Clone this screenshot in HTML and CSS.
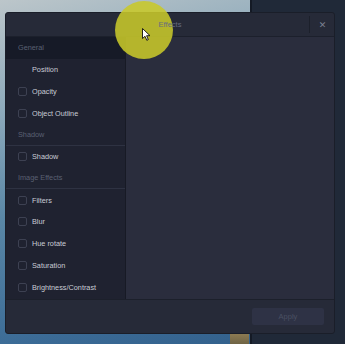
FILE: index.html
```html
<!DOCTYPE html>
<html>
<head>
    <title>Effects</title>
    <link rel="stylesheet" href="styles.css">
</head>
<body>
    <div class="screen">
        <div class="dialog">
            <div class="titlebar">
                <span class="title">Effects</span>
                <span class="close-sep"></span>
                <button class="close">&#x2715;</button>
            </div>

            <div class="main">
                <div class="sidebar">
                    <div class="group-head active">General</div>
                    <div class="item no-box">Position</div>
                    <div class="item"><span class="box"></span>Opacity</div>
                    <div class="item"><span class="box"></span>Object Outline</div>

                    <div class="group-head">Shadow</div>
                    <div class="item"><span class="box"></span>Shadow</div>

                    <div class="group-head">Image Effects</div>
                    <div class="item"><span class="box"></span>Filters</div>
                    <div class="item"><span class="box"></span>Blur</div>
                    <div class="item"><span class="box"></span>Hue rotate</div>
                    <div class="item"><span class="box"></span>Saturation</div>
                    <div class="item"><span class="box"></span>Brightness/Contrast</div>
                </div>
                <div class="content"></div>
            </div>

            <div class="footer">
                <button class="apply">Apply</button>
            </div>
        </div>

        <!-- screen recording click highlight -->
        <div class="highlight"></div>
        <svg class="cursor" width="9" height="13" viewBox="0 0 9 13">
            <path d="M0.5 0.5 L0.5 10.5 L3 8.3 L4.8 12.3 L6.3 11.6 L4.6 7.7 L8 7.7 Z" fill="#fff" stroke="#111" stroke-width="0.9"/>
        </svg>
    </div>
</body>
</html>
```

FILE: styles.css
```css
html, body {
    margin: 0;
    padding: 0;
}
body {
    width: 345px;
    height: 344px;
    overflow: hidden;
    font-family: "Liberation Sans", Arial, sans-serif;
    background:
        linear-gradient(#8c7a52, #6f6445) 230px 334px / 19px 10px no-repeat,
        linear-gradient(to right, transparent 250px, #141a25 250px, #141a25 252px, #202938 252px),
        linear-gradient(165deg, #bcc6ca 0%, #8eaabb 25%, #5a87a6 50%, #3b6b96 80%, #2f5c88 100%);
}
.screen {
    position: relative;
    width: 345px;
    height: 344px;
    padding: 12px 0 0 5px;
    box-sizing: border-box;
}
.dialog {
    width: 330px;
    height: 322px;
    background-color: #262a38;
    border: 1px solid #1a1e29;
    border-radius: 3px;
    box-sizing: border-box;
    display: flex;
    flex-direction: column;
    overflow: hidden;
}
.titlebar {
    height: 23px;
    display: flex;
    align-items: center;
    border-bottom: 1px solid #1c202c;
}
.title {
    flex: 1;
    text-align: center;
    font-size: 7.5px;
    color: #676d80;
    padding-left: 25px;
    position: relative;
    z-index: 2;
}
.close-sep {
    width: 1px;
    height: 17px;
    background-color: #1c202b;
}
.close {
    width: 24px;
    height: 23px;
    border: none;
    background: none;
    color: #7a8090;
    font-size: 9px;
    font-weight: bold;
    padding: 0 0 0 1px;
    font-family: "DejaVu Sans", sans-serif;
}
.main {
    height: 262px;
    display: flex;
    border-bottom: 1px solid #1c202b;
}
.sidebar {
    width: 119px;
    background-color: #1f2230;
    border-right: 1px solid #171a25;
    display: flex;
    flex-direction: column;
}
.content {
    flex: 1;
    background-color: #2a2d3d;
}
.group-head {
    height: 21.75px;
    box-sizing: border-box;
    padding-left: 12px;
    display: flex;
    align-items: center;
    font-size: 7.3px;
    color: #5a6072;
    border-bottom: 1px solid #2e3242;
}
.group-head.active {
    background-color: #161a27;
    border-bottom: none;
}
.item {
    height: 21.75px;
    display: flex;
    align-items: center;
    padding-left: 12px;
    font-size: 7.3px;
    color: #c9ccd5;
}
.item.no-box {
    padding-left: 26px;
}
.box {
    width: 7px;
    height: 7px;
    border: 1px solid #3d4152;
    border-radius: 2px;
    margin-right: 5px;
}
.footer {
    flex: 1;
    display: flex;
    justify-content: flex-end;
    align-items: center;
    padding-right: 10px;
}
.apply {
    width: 72px;
    height: 17px;
    border: none;
    border-radius: 2px;
    background-color: #2e3245;
    color: #4a5062;
    font-family: "Liberation Sans", Arial, sans-serif;
    font-size: 7.5px;
    padding: 0;
    margin-bottom: 1px;
}
.highlight {
    position: absolute;
    left: 115px;
    top: 1px;
    width: 58px;
    height: 58px;
    border-radius: 50%;
    background-color: rgba(200, 200, 42, 0.88);
    z-index: 1;
}
.cursor {
    position: absolute;
    left: 142px;
    top: 28px;
    z-index: 3;
}
```
